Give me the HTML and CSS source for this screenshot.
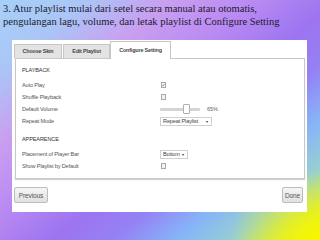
FILE: index.html
```html
<!DOCTYPE html>
<html lang="id">
<head>
    <meta charset="UTF-8">
    <meta name="viewport" content="width=device-width, initial-scale=1.0">
    <title>Configure Setting</title>
    <link rel="stylesheet" href="styles.css">
</head>
<body>
    <p class="caption">3. Atur playlist mulai dari setel secara manual atau otomatis,<br>pengulangan lagu, volume, dan letak playlist di Configure Setting</p>

    <div class="dialog">
        <div class="tabs">
            <span class="tab tab-skin">Choose Skin</span>
            <span class="tab tab-edit">Edit Playlist</span>
            <span class="tab tab-active">Configure Setting</span>
        </div>

        <div class="settings">
            <h3 class="section-title">PLAYBACK</h3>
            <div class="row">
                <span class="label">Auto Play</span>
                <span class="check">
                    <svg width="4" height="4" viewBox="0 0 4 4"><path d="M0.5 2 L1.6 3.2 L3.6 0.6" fill="none" stroke="#666" stroke-width="0.8"/></svg>
                </span>
            </div>
            <div class="row">
                <span class="label">Shuffle Playback</span>
                <span class="check"></span>
            </div>
            <div class="row">
                <span class="label">Default Volume</span>
                <span class="volume">
                    <span class="slider"><span class="thumb"></span></span>
                    <span class="percent">65%</span>
                </span>
            </div>
            <div class="row">
                <span class="label">Repeat Mode</span>
                <span class="select select-wide">Repeat Playlist <span class="arrow">&#9662;</span></span>
            </div>

            <h3 class="section-title section-second">APPEARENCE</h3>
            <div class="row">
                <span class="label">Placement of Player Bar</span>
                <span class="select select-small">Bottom <span class="arrow">&#9662;</span></span>
            </div>
            <div class="row">
                <span class="label">Show Playlist by Default</span>
                <span class="check"></span>
            </div>
        </div>

        <div class="actions">
            <button class="btn btn-prev">Previous</button>
            <button class="btn btn-done">Done</button>
        </div>
    </div>
</body>
</html>
```

FILE: styles.css
```css
body {
    margin: 0;
    width: 320px;
    height: 240px;
    overflow: hidden;
    background:
        radial-gradient(ellipse 90px 70px at 100% 100%, #f6f600 0%, rgba(246, 246, 0, 0.6) 40%, rgba(246, 246, 0, 0) 100%),
        linear-gradient(140deg, #a6d0f8 0%, #aac6f6 14%, #c99ff0 28%, #b98af2 42%, #9c74f0 56%, #9582f4 66%, #86b4f8 76%, #98d0d0 86%, #e0ee30 96%, #f4f400 100%);
    font-family: "Liberation Sans", Arial, sans-serif;
}
.caption {
    margin: 0;
    padding: 2px 0 0 3px;
    font-family: "Liberation Serif", "Times New Roman", serif;
    font-size: 10.5px;
    line-height: 13px;
    color: #1a1a30;
}
.dialog {
    margin: 12px 0 0 12px;
    width: 290px;
    height: 167px;
    padding: 2px 2px 3px 3px;
    background: #fff;
}
.tabs {
    display: flex;
    align-items: flex-end;
    height: 16px;
}
.tab {
    box-sizing: border-box;
    height: 14px;
    line-height: 13px;
    text-align: center;
    font-size: 5.4px;
    font-weight: bold;
    letter-spacing: -0.15px;
    color: #444;
    background: #e3e3e3;
    border: 1px solid #c6c6c6;
    border-bottom: none;
}
.tab-skin {
    width: 48px;
    margin-left: -1px;
    margin-right: 1px;
}
.tab-edit {
    width: 47px;
}
.tab-active {
    position: relative;
    width: 61px;
    height: 18px;
    line-height: 16px;
    margin-bottom: -1px;
    background: #fff;
}
.settings {
    height: 114px;
    padding: 5px 0 0 6px;
    border: 1px solid #c8c8c8;
    box-shadow: 0 1px 1px rgba(0, 0, 0, 0.18);
}
.section-title {
    margin: 0 0 3px;
    height: 12px;
    line-height: 12px;
    font-size: 5.6px;
    font-weight: normal;
    letter-spacing: -0.15px;
    color: #333;
}
.section-second {
    margin-top: 6px;
}
.row {
    display: grid;
    grid-template-columns: 138px 1fr;
    align-items: center;
    height: 12px;
    font-size: 5.6px;
    letter-spacing: -0.15px;
    color: #555;
}
.check {
    box-sizing: border-box;
    display: flex;
    align-items: center;
    justify-content: center;
    width: 5px;
    height: 6px;
    margin-left: 1px;
    border: 1px solid #a8a8a8;
    background: #f2f2f2;
}
.volume {
    display: flex;
    align-items: center;
}
.slider {
    position: relative;
    width: 40px;
    height: 3px;
    background: #d4d4d4;
    border-radius: 1px;
}
.thumb {
    position: absolute;
    left: 23px;
    top: -4px;
    box-sizing: border-box;
    width: 7px;
    height: 10px;
    background: #fff;
    border: 1px solid #b0b0b0;
    border-radius: 1px;
}
.percent {
    margin-left: 7px;
    color: #666;
}
.select {
    box-sizing: border-box;
    display: flex;
    align-items: center;
    justify-content: space-between;
    height: 9px;
    padding: 0 3px 0 2px;
    border: 1px solid #d0d0d0;
    color: #444;
}
.select-wide {
    width: 52px;
}
.select-small {
    width: 28px;
}
.arrow {
    font-size: 4px;
    color: #333;
}
.actions {
    display: flex;
    justify-content: space-between;
    margin: 8px 2px 0 -1px;
}
.btn {
    box-sizing: border-box;
    height: 16px;
    padding: 0;
    font-family: "Liberation Sans", Arial, sans-serif;
    font-size: 6.5px;
    letter-spacing: -0.1px;
    color: #555;
    background: linear-gradient(#f6f6f6, #e0e0e0);
    border: 1px solid #bcbcbc;
    border-radius: 2px;
}
.btn-prev {
    width: 34px;
}
.btn-done {
    width: 21px;
}
```
